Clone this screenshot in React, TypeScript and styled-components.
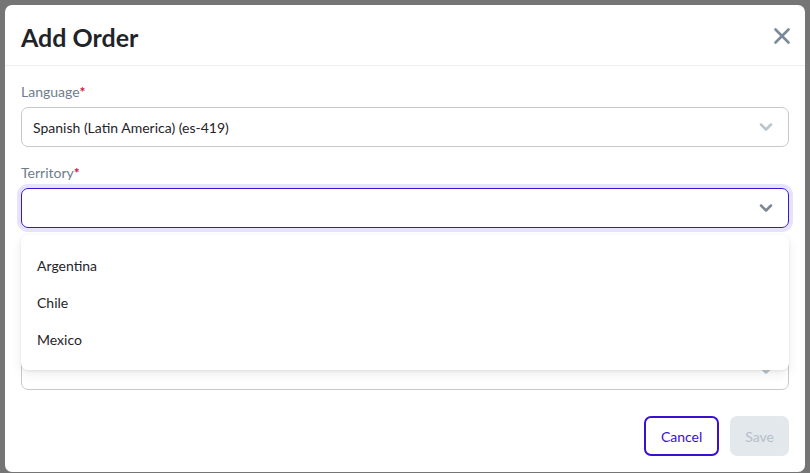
import React from "react";
import styled, { createGlobalStyle } from "styled-components";
import { ChevronDown, X } from "lucide-react";

const GlobalStyle = createGlobalStyle`
  html, body {
    margin: 0;
    padding: 0;
    font-family: Lato, "Noto Sans", sans-serif;
  }
  * {
    box-sizing: border-box;
  }
`;

const Overlay = styled.div`
  width: 810px;
  height: 473px;
  padding: 5px;
  background: #757575;
  overflow: hidden;
`;

const Modal = styled.div`
  width: 800px;
  height: 467px;
  background: #ffffff;
  border-radius: 7px;
  display: flex;
  flex-direction: column;
`;

const Header = styled.div`
  height: 61px;
  padding: 0 10px 0 16px;
  display: flex;
  align-items: center;
  justify-content: space-between;
  border-bottom: 1px solid #eceef1;
`;

const Title = styled.h2`
  margin: 0;
  padding-top: 3px;
  font-size: 25px;
  font-weight: 700;
  color: #1f2429;
`;

const CloseButton = styled.button`
  border: none;
  background: none;
  padding: 0;
  margin-top: 2px;
  display: flex;
  color: #7a8a9a;
  cursor: pointer;
`;

const Body = styled.div`
  padding: 16px 16px 16px;
  display: flex;
  flex-direction: column;
  gap: 16px;
`;

const Field = styled.div`
  position: relative;
  display: flex;
  flex-direction: column;
  gap: 5px;
`;

const Label = styled.label`
  height: 20px;
  font-size: 14px;
  line-height: 20px;
  color: #6e7d8c;
`;

const Required = styled.span`
  color: #cc1442;
  font-weight: 700;
`;

const Select = styled.div<{ $focused?: boolean }>`
  height: 40px;
  padding: 0 12px 0 11px;
  display: flex;
  align-items: center;
  justify-content: space-between;
  border-radius: 7px;
  border: ${(p) => (p.$focused ? "1.5px solid #3c12dc" : "1px solid #c9c9c9")};
  box-shadow: ${(p) => (p.$focused ? "0 0 0 4px #e6e4fc" : "none")};
  font-size: 14px;
  color: ${(p) => (p.$focused ? "#7b8794" : "#b9c4cd")};
`;

const Value = styled.span`
  color: #1f2429;
`;

const Menu = styled.ul`
  position: absolute;
  left: 0;
  right: 0;
  top: 72px;
  margin: 0;
  padding: 12px 0;
  list-style: none;
  background: #ffffff;
  border-radius: 7px;
  box-shadow: 0 1px 3px rgba(0, 0, 0, 0.08), 0 4px 12px rgba(0, 0, 0, 0.08);
  z-index: 2;
`;

const MenuItem = styled.li`
  height: 37px;
  padding: 0 16px;
  display: flex;
  align-items: center;
  font-size: 14px;
  color: #1f2429;
`;

const Footer = styled.div`
  padding: 10px 16px 16px;
  display: flex;
  justify-content: flex-end;
  gap: 11px;
`;

const Button = styled.button<{ $variant: "outline" | "disabled" }>`
  height: 40px;
  padding: 0 15px;
  border-radius: 7px;
  font-family: inherit;
  font-size: 14px;
  border: ${(p) => (p.$variant === "outline" ? "2px solid #3a10d0" : "none")};
  background: ${(p) => (p.$variant === "outline" ? "#ffffff" : "#e2e8ec")};
  color: ${(p) => (p.$variant === "outline" ? "#3a12c8" : "#b6c0c9")};
`;

const Chevron = () => <ChevronDown size={20} strokeWidth={3} />;

const territories = ["Argentina", "Chile", "Mexico"];

const App = () => {
  return (
    <>
      <GlobalStyle />
      <Overlay>
        <Modal>
          <Header>
            <Title>Add Order</Title>
            <CloseButton>
              <X size={26} strokeWidth={2.4} />
            </CloseButton>
          </Header>
          <Body>
            <Field>
              <Label>
                Language<Required>*</Required>
              </Label>
              <Select>
                <Value>Spanish (Latin America) (es-419)</Value>
                <Chevron />
              </Select>
            </Field>
            <Field>
              <Label>
                Territory<Required>*</Required>
              </Label>
              <Select $focused>
                <Value />
                <Chevron />
              </Select>
              <Menu>
                {territories.map((t) => (
                  <MenuItem key={t}>{t}</MenuItem>
                ))}
              </Menu>
            </Field>
            <Field>
              <Label />
              <Select>
                <Value />
                <Chevron />
              </Select>
            </Field>
            <Field>
              <Label />
              <Select>
                <Value />
                <Chevron />
              </Select>
            </Field>
          </Body>
          <Footer>
            <Button $variant="outline">Cancel</Button>
            <Button $variant="disabled" disabled>
              Save
            </Button>
          </Footer>
        </Modal>
      </Overlay>
    </>
  );
};

export default App;
